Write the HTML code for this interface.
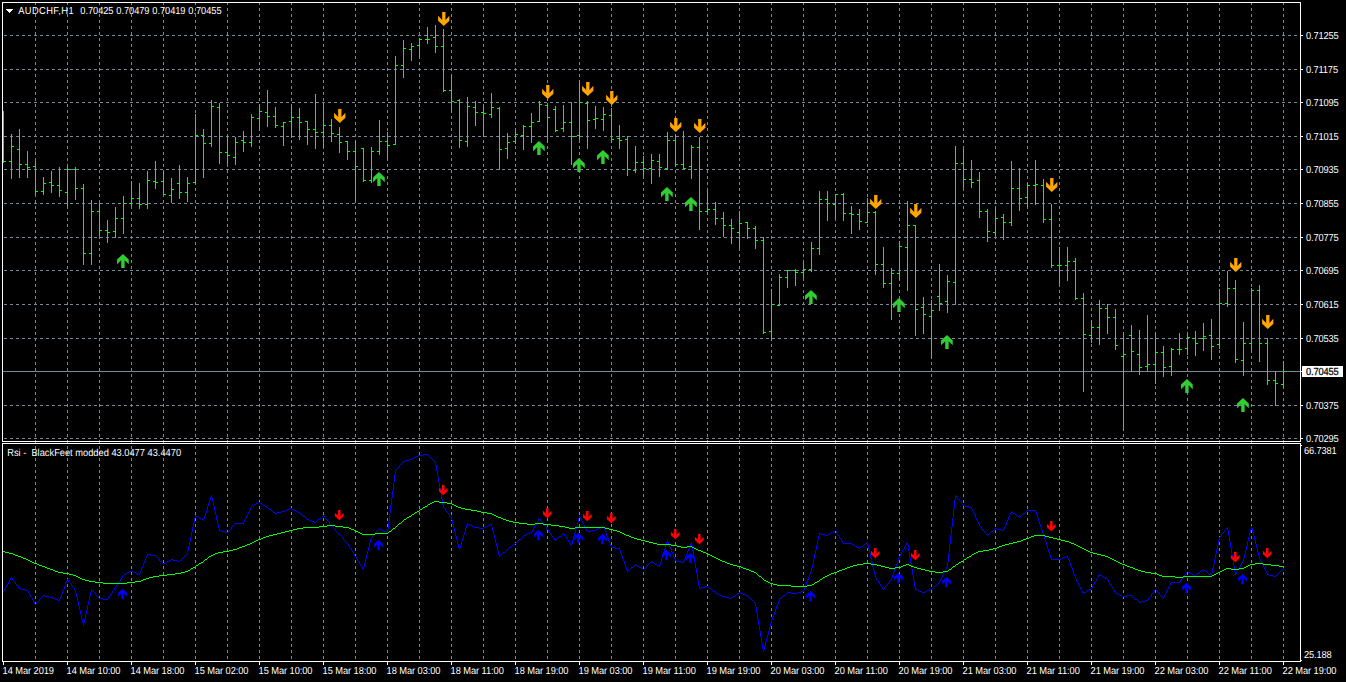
<!DOCTYPE html>
<html lang="en"><head><meta charset="utf-8"><title>AUDCHF,H1</title>
<style>html,body{margin:0;padding:0;background:#000;overflow:hidden}svg{display:block}text{font-family:"Liberation Sans",Arial,sans-serif;font-size:10.2px;fill:#fff;text-rendering:geometricPrecision}</style></head><body>
<svg width="1346" height="682" viewBox="0 0 1346 682">
<rect width="1346" height="682" fill="#000"/>
<g shape-rendering="crispEdges" stroke="#778899" stroke-width="1" fill="none" stroke-dasharray="3 3">
<path d="M35.5 2V661M67.5 2V661M99.5 2V661M131.5 2V661M163.5 2V661M195.5 2V661M227.5 2V661M259.5 2V661M291.5 2V661M323.5 2V661M355.5 2V661M387.5 2V661M419.5 2V661M451.5 2V661M483.5 2V661M515.5 2V661M547.5 2V661M579.5 2V661M611.5 2V661M643.5 2V661M675.5 2V661M707.5 2V661M739.5 2V661M771.5 2V661M803.5 2V661M835.5 2V661M867.5 2V661M899.5 2V661M931.5 2V661M963.5 2V661M995.5 2V661M1027.5 2V661M1059.5 2V661M1091.5 2V661M1123.5 2V661M1155.5 2V661M1187.5 2V661M1219.5 2V661M1251.5 2V661M1283.5 2V661"/>
<path d="M4 35.5H1300M4 69.5H1300M4 102.5H1300M4 136.5H1300M4 169.5H1300M4 203.5H1300M4 237.5H1300M4 270.5H1300M4 304.5H1300M4 338.5H1300M4 405.5H1300M4 438.5H1300"/>
</g>
<rect x="3" y="371" width="1297" height="1" fill="#778899" shape-rendering="crispEdges"/>
<path d="M3 111h1v52h-1zM4 161h2v1h-2zM11 134h1v45h-1zM9 161h2v1h-2zM12 146h2v1h-2zM19 129h1v49h-1zM17 149h2v1h-2zM20 164h2v1h-2zM27 151h1v27h-1zM25 164h2v1h-2zM28 167h2v1h-2zM35 161h1v34h-1zM33 166h2v1h-2zM36 191h2v1h-2zM43 177h1v18h-1zM41 191h2v1h-2zM44 183h2v1h-2zM51 171h1v22h-1zM49 182h2v1h-2zM52 185h2v1h-2zM59 167h1v30h-1zM57 185h2v1h-2zM60 190h2v1h-2zM67 167h1v39h-1zM65 192h2v1h-2zM68 169h2v1h-2zM75 167h1v33h-1zM73 169h2v1h-2zM76 188h2v1h-2zM83 184h1v81h-1zM81 188h2v1h-2zM84 253h2v1h-2zM91 200h1v65h-1zM89 253h2v1h-2zM92 211h2v1h-2zM99 203h1v33h-1zM97 211h2v1h-2zM100 230h2v1h-2zM107 220h1v23h-1zM105 230h2v1h-2zM108 232h2v1h-2zM115 207h1v31h-1zM113 231h2v1h-2zM116 218h2v1h-2zM123 196h1v38h-1zM121 218h2v1h-2zM124 203h2v1h-2zM131 181h1v25h-1zM129 203h2v1h-2zM132 198h2v1h-2zM139 183h1v26h-1zM137 198h2v1h-2zM140 204h2v1h-2zM147 171h1v38h-1zM145 204h2v1h-2zM148 180h2v1h-2zM155 161h1v28h-1zM153 181h2v1h-2zM156 182h2v1h-2zM163 171h1v24h-1zM161 181h2v1h-2zM164 194h2v1h-2zM171 178h1v25h-1zM169 195h2v1h-2zM172 189h2v1h-2zM179 165h1v34h-1zM177 183h2v1h-2zM180 192h2v1h-2zM187 177h1v25h-1zM185 192h2v1h-2zM188 183h2v1h-2zM195 114h1v70h-1zM193 182h2v1h-2zM196 135h2v1h-2zM203 129h1v49h-1zM201 135h2v1h-2zM204 143h2v1h-2zM211 100h1v47h-1zM209 143h2v1h-2zM212 106h2v1h-2zM219 103h1v61h-1zM217 107h2v1h-2zM220 152h2v1h-2zM227 136h1v28h-1zM225 152h2v1h-2zM228 155h2v1h-2zM235 137h1v28h-1zM233 157h2v1h-2zM236 142h2v1h-2zM243 131h1v21h-1zM241 140h2v1h-2zM244 142h2v1h-2zM251 114h1v33h-1zM249 142h2v1h-2zM252 117h2v1h-2zM259 104h1v27h-1zM257 118h2v1h-2zM260 111h2v1h-2zM267 90h1v37h-1zM265 112h2v1h-2zM268 116h2v1h-2zM275 107h1v21h-1zM273 116h2v1h-2zM276 125h2v1h-2zM283 122h1v24h-1zM281 126h2v1h-2zM284 122h2v1h-2zM291 106h1v32h-1zM289 121h2v1h-2zM292 117h2v1h-2zM299 108h1v32h-1zM297 117h2v1h-2zM300 122h2v1h-2zM307 121h1v24h-1zM305 121h2v1h-2zM308 129h2v1h-2zM315 94h1v55h-1zM313 129h2v1h-2zM316 132h2v1h-2zM323 103h1v45h-1zM321 132h2v1h-2zM324 125h2v1h-2zM331 119h1v23h-1zM329 125h2v1h-2zM332 133h2v1h-2zM339 127h1v26h-1zM337 134h2v1h-2zM340 142h2v1h-2zM347 141h1v19h-1zM345 141h2v1h-2zM348 151h2v1h-2zM355 140h1v62h-1zM353 151h2v1h-2zM356 166h2v1h-2zM363 148h1v34h-1zM361 148h2v1h-2zM364 180h2v1h-2zM371 147h1v36h-1zM369 180h2v1h-2zM372 151h2v1h-2zM379 120h1v35h-1zM377 151h2v1h-2zM380 141h2v1h-2zM387 132h1v27h-1zM385 141h2v1h-2zM388 145h2v1h-2zM395 56h1v89h-1zM393 144h2v1h-2zM396 65h2v1h-2zM403 40h1v38h-1zM401 65h2v1h-2zM404 48h2v1h-2zM411 43h1v18h-1zM409 49h2v1h-2zM412 46h2v1h-2zM419 38h1v19h-1zM417 45h2v1h-2zM420 39h2v1h-2zM427 27h1v17h-1zM425 39h2v1h-2zM428 39h2v1h-2zM435 25h1v28h-1zM433 37h2v1h-2zM436 46h2v1h-2zM443 29h1v63h-1zM441 46h2v1h-2zM444 90h2v1h-2zM451 75h1v38h-1zM449 90h2v1h-2zM452 101h2v1h-2zM459 99h1v49h-1zM457 100h2v1h-2zM460 140h2v1h-2zM467 97h1v50h-1zM465 141h2v1h-2zM468 106h2v1h-2zM475 101h1v25h-1zM473 107h2v1h-2zM476 112h2v1h-2zM483 106h1v31h-1zM481 112h2v1h-2zM484 113h2v1h-2zM491 93h1v25h-1zM489 114h2v1h-2zM492 107h2v1h-2zM499 107h1v63h-1zM497 108h2v1h-2zM500 149h2v1h-2zM507 133h1v26h-1zM505 148h2v1h-2zM508 142h2v1h-2zM515 130h1v14h-1zM513 141h2v1h-2zM516 134h2v1h-2zM523 125h1v25h-1zM521 135h2v1h-2zM524 126h2v1h-2zM531 113h1v30h-1zM529 126h2v1h-2zM532 122h2v1h-2zM539 101h1v21h-1zM537 121h2v1h-2zM540 104h2v1h-2zM547 103h1v40h-1zM545 105h2v1h-2zM548 117h2v1h-2zM555 106h1v26h-1zM553 109h2v1h-2zM556 130h2v1h-2zM563 105h1v27h-1zM561 128h2v1h-2zM564 122h2v1h-2zM571 102h1v63h-1zM569 122h2v1h-2zM572 136h2v1h-2zM579 80h1v60h-1zM577 135h2v1h-2zM580 102h2v1h-2zM587 101h1v48h-1zM585 103h2v1h-2zM588 120h2v1h-2zM595 106h1v23h-1zM593 119h2v1h-2zM596 118h2v1h-2zM603 107h1v24h-1zM601 119h2v1h-2zM604 114h2v1h-2zM611 108h1v35h-1zM609 115h2v1h-2zM612 139h2v1h-2zM619 125h1v24h-1zM617 138h2v1h-2zM620 140h2v1h-2zM627 136h1v40h-1zM625 139h2v1h-2zM628 169h2v1h-2zM635 146h1v27h-1zM633 170h2v1h-2zM636 162h2v1h-2zM643 156h1v20h-1zM641 162h2v1h-2zM644 168h2v1h-2zM651 154h1v30h-1zM649 168h2v1h-2zM652 160h2v1h-2zM659 154h1v23h-1zM657 161h2v1h-2zM660 167h2v1h-2zM667 132h1v38h-1zM665 168h2v1h-2zM668 140h2v1h-2zM675 134h1v33h-1zM673 140h2v1h-2zM676 164h2v1h-2zM683 131h1v38h-1zM681 164h2v1h-2zM684 168h2v1h-2zM691 145h1v34h-1zM689 166h2v1h-2zM692 147h2v1h-2zM699 137h1v93h-1zM697 147h2v1h-2zM700 211h2v1h-2zM707 191h1v22h-1zM705 211h2v1h-2zM708 209h2v1h-2zM715 202h1v23h-1zM713 209h2v1h-2zM716 218h2v1h-2zM723 212h1v25h-1zM721 218h2v1h-2zM724 225h2v1h-2zM731 219h1v25h-1zM729 225h2v1h-2zM732 228h2v1h-2zM739 211h1v37h-1zM737 232h2v1h-2zM740 223h2v1h-2zM747 222h1v17h-1zM745 222h2v1h-2zM748 228h2v1h-2zM755 226h1v23h-1zM753 228h2v1h-2zM756 240h2v1h-2zM763 237h1v97h-1zM761 240h2v1h-2zM764 332h2v1h-2zM771 289h1v52h-1zM769 331h2v1h-2zM772 304h2v1h-2zM779 274h1v32h-1zM777 305h2v1h-2zM780 277h2v1h-2zM787 270h1v18h-1zM785 277h2v1h-2zM788 270h2v1h-2zM795 269h1v17h-1zM793 270h2v1h-2zM796 272h2v1h-2zM803 263h1v15h-1zM801 272h2v1h-2zM804 269h2v1h-2zM811 242h1v30h-1zM809 269h2v1h-2zM812 248h2v1h-2zM819 191h1v64h-1zM817 248h2v1h-2zM820 199h2v1h-2zM827 191h1v30h-1zM825 199h2v1h-2zM828 203h2v1h-2zM835 194h1v25h-1zM833 204h2v1h-2zM836 194h2v1h-2zM843 193h1v28h-1zM841 194h2v1h-2zM844 213h2v1h-2zM851 206h1v28h-1zM849 213h2v1h-2zM852 214h2v1h-2zM859 209h1v21h-1zM857 214h2v1h-2zM860 221h2v1h-2zM867 198h1v25h-1zM865 222h2v1h-2zM868 212h2v1h-2zM875 211h1v64h-1zM873 212h2v1h-2zM876 264h2v1h-2zM883 247h1v41h-1zM881 264h2v1h-2zM884 283h2v1h-2zM891 268h1v52h-1zM889 283h2v1h-2zM892 273h2v1h-2zM899 241h1v39h-1zM897 273h2v1h-2zM900 246h2v1h-2zM907 201h1v90h-1zM905 247h2v1h-2zM908 225h2v1h-2zM915 225h1v111h-1zM913 225h2v1h-2zM916 309h2v1h-2zM923 297h1v37h-1zM921 307h2v1h-2zM924 314h2v1h-2zM931 300h1v58h-1zM929 316h2v1h-2zM932 310h2v1h-2zM939 264h1v47h-1zM937 296h2v1h-2zM940 303h2v1h-2zM947 275h1v38h-1zM945 301h2v1h-2zM948 281h2v1h-2zM955 146h1v159h-1zM953 282h2v1h-2zM956 163h2v1h-2zM963 149h1v39h-1zM961 163h2v1h-2zM964 179h2v1h-2zM971 160h1v28h-1zM969 179h2v1h-2zM972 182h2v1h-2zM979 172h1v46h-1zM977 180h2v1h-2zM980 211h2v1h-2zM987 209h1v33h-1zM985 211h2v1h-2zM988 231h2v1h-2zM995 208h1v28h-1zM993 232h2v1h-2zM996 218h2v1h-2zM1003 214h1v26h-1zM1001 217h2v1h-2zM1004 222h2v1h-2zM1011 161h1v65h-1zM1009 222h2v1h-2zM1012 188h2v1h-2zM1019 168h1v43h-1zM1017 188h2v1h-2zM1020 198h2v1h-2zM1027 183h1v24h-1zM1025 197h2v1h-2zM1028 185h2v1h-2zM1035 160h1v45h-1zM1033 185h2v1h-2zM1036 184h2v1h-2zM1043 179h1v44h-1zM1041 185h2v1h-2zM1044 219h2v1h-2zM1051 204h1v64h-1zM1049 219h2v1h-2zM1052 265h2v1h-2zM1059 247h1v37h-1zM1057 265h2v1h-2zM1060 265h2v1h-2zM1067 247h1v34h-1zM1065 265h2v1h-2zM1068 261h2v1h-2zM1075 258h1v42h-1zM1073 261h2v1h-2zM1076 298h2v1h-2zM1083 293h1v99h-1zM1081 298h2v1h-2zM1084 334h2v1h-2zM1091 321h1v22h-1zM1089 335h2v1h-2zM1092 327h2v1h-2zM1099 300h1v45h-1zM1097 327h2v1h-2zM1100 308h2v1h-2zM1107 304h1v30h-1zM1105 308h2v1h-2zM1108 317h2v1h-2zM1115 309h1v41h-1zM1113 317h2v1h-2zM1116 345h2v1h-2zM1123 332h1v99h-1zM1121 356h2v1h-2zM1124 354h2v1h-2zM1131 325h1v47h-1zM1129 335h2v1h-2zM1132 351h2v1h-2zM1139 330h1v45h-1zM1137 354h2v1h-2zM1140 367h2v1h-2zM1147 315h1v56h-1zM1145 366h2v1h-2zM1148 364h2v1h-2zM1155 333h1v51h-1zM1153 364h2v1h-2zM1156 352h2v1h-2zM1163 346h1v31h-1zM1161 352h2v1h-2zM1164 367h2v1h-2zM1171 348h1v28h-1zM1169 366h2v1h-2zM1172 349h2v1h-2zM1179 333h1v22h-1zM1177 349h2v1h-2zM1180 349h2v1h-2zM1187 335h1v20h-1zM1185 348h2v1h-2zM1188 337h2v1h-2zM1195 331h1v25h-1zM1193 338h2v1h-2zM1196 343h2v1h-2zM1203 323h1v28h-1zM1201 338h2v1h-2zM1204 336h2v1h-2zM1211 319h1v41h-1zM1209 335h2v1h-2zM1212 346h2v1h-2zM1219 289h1v60h-1zM1217 344h2v1h-2zM1220 303h2v1h-2zM1227 271h1v36h-1zM1225 303h2v1h-2zM1228 288h2v1h-2zM1235 280h1v83h-1zM1233 288h2v1h-2zM1236 359h2v1h-2zM1243 322h1v54h-1zM1241 360h2v1h-2zM1244 343h2v1h-2zM1251 288h1v62h-1zM1249 343h2v1h-2zM1252 290h2v1h-2zM1259 285h1v77h-1zM1257 290h2v1h-2zM1260 343h2v1h-2zM1267 338h1v47h-1zM1265 343h2v1h-2zM1268 380h2v1h-2zM1275 371h1v35h-1zM1273 380h2v1h-2zM1276 383h2v1h-2zM1283 361h1v26h-1zM1281 384h2v1h-2zM1284 371h2v1h-2z" fill="#00ff00" shape-rendering="crispEdges"/>
<path d="M3 591h1v1h-1zM4 589h1v2h-1zM5 587h1v2h-1zM6 585h1v2h-1zM7 584h1v1h-1zM8 582h1v2h-1zM9 580h1v2h-1zM10 578h1v2h-1zM11 577h1v1h-1zM12 578h1v2h-1zM13 580h1v1h-1zM14 581h1v1h-1zM15 582h1v2h-1zM16 584h1v1h-1zM17 585h1v1h-1zM18 586h1v2h-1zM19 588h2v1h-2zM21 589h4v1h-4zM25 590h3v1h-3zM28 591h1v2h-1zM29 593h1v2h-1zM30 595h1v2h-1zM31 597h1v1h-1zM32 598h1v2h-1zM33 600h1v2h-1zM34 602h1v2h-1zM35 604h1v1h-1zM36 603h1v1h-1zM37 602h1v1h-1zM38 601h1v1h-1zM39 599h1v2h-1zM40 598h1v1h-1zM41 597h1v1h-1zM42 596h1v1h-1zM43 595h2v1h-2zM45 596h4v1h-4zM49 597h4v1h-4zM53 598h2v1h-2zM55 599h3v1h-3zM58 600h2v1h-2zM59 599h1v1h-1zM60 597h1v2h-1zM61 594h1v3h-1zM62 591h1v3h-1zM63 589h1v2h-1zM64 586h1v3h-1zM65 583h1v3h-1zM66 581h1v2h-1zM67 579h1v2h-1zM68 580h1v2h-1zM69 582h1v1h-1zM70 583h1v1h-1zM71 584h1v2h-1zM72 586h1v1h-1zM73 587h1v1h-1zM74 588h1v2h-1zM75 590h1v3h-1zM76 593h1v4h-1zM77 597h1v4h-1zM78 601h1v5h-1zM79 606h1v4h-1zM80 610h1v5h-1zM81 615h1v4h-1zM82 619h1v4h-1zM83 623h1v3h-1zM84 619h1v4h-1zM85 614h1v5h-1zM86 610h1v4h-1zM87 605h1v5h-1zM88 601h1v4h-1zM89 596h1v5h-1zM90 592h1v4h-1zM91 589h1v3h-1zM92 590h1v1h-1zM93 591h1v1h-1zM94 592h1v1h-1zM95 593h1v2h-1zM96 595h1v1h-1zM97 596h1v1h-1zM98 597h1v1h-1zM99 598h4v1h-4zM103 599h5v1h-5zM108 597h1v2h-1zM109 596h1v1h-1zM110 594h1v2h-1zM111 593h1v1h-1zM112 591h1v2h-1zM113 590h1v1h-1zM114 588h1v2h-1zM115 587h1v1h-1zM116 585h1v2h-1zM117 584h1v1h-1zM118 582h1v2h-1zM119 581h1v1h-1zM120 579h1v2h-1zM121 578h1v1h-1zM122 576h1v2h-1zM123 575h1v1h-1zM124 574h2v1h-2zM126 573h1v1h-1zM127 572h2v1h-2zM129 571h2v1h-2zM131 570h1v1h-1zM132 571h2v1h-2zM134 572h2v1h-2zM136 573h2v1h-2zM138 574h2v1h-2zM139 573h1v1h-1zM140 571h1v2h-1zM141 568h1v3h-1zM142 566h1v2h-1zM143 563h1v3h-1zM144 561h1v2h-1zM145 558h1v3h-1zM146 556h1v2h-1zM147 554h4v1h-4zM147 555h1v1h-1zM151 555h5v1h-5zM156 556h1v1h-1zM157 557h1v1h-1zM158 558h1v1h-1zM159 559h1v2h-1zM160 561h1v1h-1zM161 562h1v1h-1zM162 563h1v1h-1zM163 564h1v1h-1zM164 563h2v1h-2zM166 562h1v1h-1zM167 561h2v1h-2zM169 560h2v1h-2zM171 559h2v1h-2zM173 560h4v1h-4zM177 561h3v1h-3zM180 560h1v1h-1zM181 559h1v1h-1zM182 558h1v1h-1zM183 557h1v1h-1zM184 556h1v1h-1zM185 555h1v1h-1zM186 554h1v1h-1zM187 551h1v3h-1zM188 546h1v5h-1zM189 542h1v4h-1zM190 537h1v5h-1zM191 532h1v5h-1zM192 527h1v5h-1zM193 523h1v4h-1zM194 518h1v5h-1zM195 515h1v3h-1zM196 516h2v1h-2zM198 517h1v1h-1zM199 518h2v1h-2zM201 519h3v1h-3zM203 520h1v1h-1zM204 516h1v3h-1zM205 513h1v3h-1zM206 510h1v3h-1zM207 506h1v4h-1zM208 503h1v3h-1zM209 500h1v3h-1zM210 497h1v3h-1zM211 495h1v3h-1zM212 498h1v4h-1zM213 502h1v4h-1zM214 506h1v5h-1zM215 511h1v4h-1zM216 515h1v5h-1zM217 520h1v4h-1zM218 524h1v4h-1zM219 528h1v3h-1zM220 530h1v1h-1zM221 531h4v1h-4zM225 532h3v1h-3zM228 531h1v1h-1zM229 530h1v1h-1zM230 529h1v1h-1zM231 527h1v2h-1zM232 526h1v1h-1zM233 525h1v1h-1zM234 524h1v1h-1zM235 523h9v1h-9zM243 522h1v1h-1zM244 520h1v2h-1zM245 518h1v2h-1zM246 516h1v2h-1zM247 514h1v2h-1zM248 512h1v2h-1zM249 510h1v2h-1zM250 508h1v2h-1zM251 506h1v2h-1zM252 505h2v1h-2zM254 504h2v1h-2zM256 503h2v1h-2zM258 502h2v1h-2zM260 503h2v1h-2zM262 504h1v1h-1zM263 505h2v1h-2zM265 506h2v1h-2zM267 507h1v1h-1zM268 508h1v1h-1zM269 509h2v1h-2zM271 510h1v1h-1zM272 511h1v1h-1zM273 512h2v1h-2zM275 513h2v1h-2zM277 512h4v1h-4zM281 511h4v1h-4zM285 510h2v1h-2zM287 509h3v1h-3zM290 508h2v1h-2zM292 509h2v1h-2zM294 510h2v1h-2zM296 511h2v1h-2zM298 512h2v1h-2zM300 513h1v1h-1zM301 514h1v1h-1zM302 515h1v1h-1zM303 516h2v1h-2zM305 517h1v1h-1zM306 518h1v1h-1zM307 519h2v1h-2zM309 520h2v1h-2zM311 521h3v1h-3zM314 522h2v1h-2zM316 521h1v1h-1zM317 520h1v1h-1zM318 519h1v1h-1zM319 518h2v1h-2zM321 517h1v1h-1zM322 516h1v1h-1zM323 515h1v1h-1zM324 516h1v1h-1zM325 517h1v2h-1zM326 519h1v1h-1zM327 520h1v1h-1zM328 521h1v1h-1zM329 522h1v2h-1zM330 524h1v1h-1zM331 525h1v1h-1zM332 526h1v1h-1zM333 527h1v1h-1zM334 528h1v1h-1zM335 529h1v2h-1zM336 531h1v1h-1zM337 532h1v1h-1zM338 533h1v1h-1zM339 534h1v1h-1zM340 535h1v1h-1zM341 536h1v1h-1zM342 537h1v1h-1zM343 538h1v2h-1zM344 540h1v1h-1zM345 541h1v1h-1zM346 542h1v1h-1zM347 543h1v1h-1zM348 544h1v2h-1zM349 546h1v2h-1zM350 548h1v1h-1zM351 549h1v2h-1zM352 551h1v1h-1zM353 552h1v2h-1zM354 554h1v2h-1zM355 556h1v1h-1zM356 557h1v2h-1zM357 559h1v2h-1zM358 561h1v1h-1zM359 562h1v2h-1zM360 564h1v1h-1zM361 565h1v2h-1zM362 567h2v1h-2zM362 568h2v1h-2zM363 569h1v1h-1zM364 563h1v4h-1zM365 559h1v4h-1zM366 555h1v4h-1zM367 551h1v4h-1zM368 547h1v4h-1zM369 543h1v4h-1zM370 539h1v4h-1zM371 537h1v2h-1zM372 536h1v1h-1zM373 535h1v1h-1zM374 534h1v1h-1zM375 532h1v2h-1zM376 531h1v1h-1zM377 530h1v1h-1zM378 529h1v1h-1zM379 528h1v1h-1zM380 529h2v1h-2zM382 530h2v1h-2zM384 531h2v1h-2zM386 532h2v1h-2zM387 529h1v3h-1zM388 521h1v8h-1zM389 513h1v8h-1zM390 505h1v8h-1zM391 498h1v7h-1zM392 490h1v8h-1zM393 482h1v8h-1zM394 474h1v8h-1zM395 470h1v4h-1zM396 469h1v1h-1zM397 468h1v1h-1zM398 467h1v1h-1zM399 465h1v2h-1zM400 464h1v1h-1zM401 463h1v1h-1zM402 462h1v1h-1zM403 461h2v1h-2zM405 460h4v1h-4zM409 459h3v1h-3zM412 458h2v1h-2zM414 457h2v1h-2zM416 456h2v1h-2zM418 455h5v1h-5zM423 454h5v1h-5zM428 455h1v1h-1zM429 456h1v1h-1zM430 457h1v1h-1zM431 458h1v1h-1zM432 459h1v1h-1zM433 460h1v1h-1zM434 461h1v1h-1zM435 462h1v3h-1zM436 465h1v6h-1zM437 471h1v6h-1zM438 477h1v5h-1zM439 482h1v6h-1zM440 488h1v5h-1zM441 493h1v6h-1zM442 499h1v6h-1zM443 505h1v3h-1zM444 508h1v1h-1zM445 509h1v2h-1zM446 511h1v1h-1zM447 512h1v1h-1zM448 513h1v1h-1zM449 514h1v2h-1zM450 516h1v1h-1zM451 517h1v3h-1zM452 520h1v4h-1zM453 524h1v4h-1zM454 528h1v4h-1zM455 532h1v4h-1zM456 536h1v4h-1zM457 540h1v4h-1zM458 544h1v4h-1zM459 548h1v2h-1zM460 545h1v3h-1zM461 541h1v4h-1zM462 538h1v3h-1zM463 535h1v3h-1zM464 532h1v3h-1zM465 528h1v4h-1zM466 525h1v3h-1zM467 523h1v2h-1zM468 524h2v1h-2zM470 525h2v1h-2zM472 526h2v1h-2zM474 527h5v1h-5zM479 528h5v1h-5zM484 527h2v1h-2zM486 526h2v1h-2zM488 525h2v1h-2zM490 524h2v1h-2zM491 525h1v2h-1zM492 527h1v4h-1zM493 531h1v4h-1zM494 535h1v4h-1zM495 539h1v4h-1zM496 543h1v4h-1zM497 547h1v4h-1zM498 551h1v4h-1zM499 555h2v1h-2zM499 556h1v1h-1zM501 554h1v1h-1zM502 553h1v1h-1zM503 552h2v1h-2zM505 551h1v1h-1zM506 550h1v1h-1zM507 549h1v1h-1zM508 548h1v1h-1zM509 547h2v1h-2zM511 546h1v1h-1zM512 545h1v1h-1zM513 544h2v1h-2zM515 543h1v1h-1zM516 542h1v1h-1zM517 541h1v1h-1zM518 540h1v1h-1zM519 539h2v1h-2zM521 538h1v1h-1zM522 537h1v1h-1zM523 536h1v1h-1zM524 535h2v1h-2zM526 534h2v1h-2zM528 533h2v1h-2zM530 532h2v1h-2zM532 530h1v2h-1zM533 528h1v2h-1zM534 526h1v2h-1zM535 525h1v1h-1zM536 523h1v2h-1zM537 521h1v2h-1zM538 519h1v2h-1zM539 518h1v1h-1zM540 519h1v2h-1zM541 521h1v1h-1zM542 522h1v1h-1zM543 523h1v2h-1zM544 525h1v1h-1zM545 526h1v1h-1zM546 527h1v2h-1zM547 529h1v1h-1zM548 530h1v2h-1zM549 532h1v1h-1zM550 533h1v1h-1zM551 534h1v2h-1zM552 536h1v1h-1zM553 537h1v1h-1zM554 538h1v2h-1zM555 540h1v1h-1zM556 539h1v1h-1zM557 538h1v1h-1zM558 537h1v1h-1zM559 536h2v1h-2zM561 535h1v1h-1zM562 534h1v1h-1zM563 533h1v1h-1zM564 534h1v2h-1zM565 536h1v1h-1zM566 537h1v2h-1zM567 539h1v1h-1zM568 540h1v2h-1zM569 542h1v1h-1zM570 543h1v2h-1zM571 544h1v2h-1zM572 540h1v4h-1zM573 536h1v4h-1zM574 533h1v3h-1zM575 529h1v4h-1zM576 526h1v3h-1zM577 522h1v4h-1zM578 518h1v4h-1zM579 516h1v2h-1zM580 517h1v2h-1zM581 519h1v2h-1zM582 521h1v2h-1zM583 523h1v2h-1zM584 525h1v2h-1zM585 527h1v2h-1zM586 529h1v2h-1zM587 531h4v1h-4zM591 530h5v1h-5zM596 529h2v1h-2zM598 528h2v1h-2zM600 527h2v1h-2zM602 526h2v1h-2zM603 527h1v1h-1zM604 528h1v2h-1zM605 530h1v3h-1zM606 533h1v3h-1zM607 536h1v2h-1zM608 538h1v3h-1zM609 541h1v3h-1zM610 544h1v2h-1zM611 546h1v2h-1zM612 547h3v1h-3zM615 548h5v1h-5zM619 549h1v1h-1zM620 550h1v3h-1zM621 553h1v3h-1zM622 556h1v3h-1zM623 559h1v2h-1zM624 561h1v3h-1zM625 564h1v3h-1zM626 567h1v3h-1zM627 570h2v1h-2zM627 571h1v1h-1zM629 569h1v1h-1zM630 568h1v1h-1zM631 567h2v1h-2zM633 566h1v1h-1zM634 565h1v1h-1zM635 564h1v1h-1zM636 565h2v1h-2zM638 566h1v1h-1zM639 567h2v1h-2zM641 568h2v1h-2zM643 569h1v1h-1zM644 568h1v1h-1zM645 567h1v1h-1zM646 566h1v1h-1zM647 565h1v1h-1zM648 564h1v1h-1zM649 563h1v1h-1zM650 562h1v1h-1zM651 561h1v1h-1zM652 562h2v1h-2zM654 563h1v1h-1zM655 564h2v1h-2zM657 565h3v1h-3zM659 566h1v1h-1zM660 562h1v3h-1zM661 558h1v4h-1zM662 555h1v3h-1zM663 552h1v3h-1zM664 549h1v3h-1zM665 545h1v4h-1zM666 542h1v3h-1zM667 540h1v2h-1zM668 542h1v2h-1zM669 544h1v3h-1zM670 547h1v2h-1zM671 549h1v3h-1zM672 552h1v2h-1zM673 554h1v3h-1zM674 557h1v2h-1zM675 559h1v2h-1zM676 560h1v1h-1zM677 561h4v1h-4zM681 562h3v1h-3zM683 561h1v1h-1zM684 559h1v2h-1zM685 556h1v3h-1zM686 554h1v2h-1zM687 551h1v3h-1zM688 549h1v2h-1zM689 546h1v3h-1zM690 544h2v1h-2zM690 545h1v1h-1zM691 542h1v2h-1zM692 545h1v6h-1zM693 551h1v6h-1zM694 557h1v6h-1zM695 563h1v5h-1zM696 568h1v6h-1zM697 574h1v6h-1zM698 580h1v6h-1zM699 586h1v3h-1zM700 588h1v1h-1zM701 587h4v1h-4zM705 586h3v1h-3zM708 587h1v1h-1zM709 588h2v1h-2zM711 589h1v1h-1zM712 590h1v1h-1zM713 591h2v1h-2zM715 592h1v1h-1zM716 593h2v1h-2zM718 594h2v1h-2zM720 595h2v1h-2zM722 596h3v1h-3zM725 597h4v1h-4zM729 598h3v1h-3zM732 597h1v1h-1zM733 596h2v1h-2zM735 595h1v1h-1zM736 594h1v1h-1zM737 593h2v1h-2zM739 592h2v1h-2zM741 593h2v1h-2zM743 594h3v1h-3zM746 595h2v1h-2zM748 596h1v1h-1zM749 597h1v1h-1zM750 598h1v1h-1zM751 599h1v1h-1zM752 600h1v1h-1zM753 601h1v1h-1zM754 602h1v1h-1zM755 603h1v4h-1zM756 607h1v6h-1zM757 613h1v6h-1zM758 619h1v6h-1zM759 625h1v6h-1zM760 631h1v6h-1zM761 637h1v6h-1zM762 643h1v6h-1zM763 649h1v3h-1zM764 646h1v4h-1zM765 642h1v4h-1zM766 638h1v4h-1zM767 635h1v3h-1zM768 631h1v4h-1zM769 627h1v4h-1zM770 623h1v4h-1zM771 620h1v3h-1zM772 617h1v3h-1zM773 615h1v2h-1zM774 612h1v3h-1zM775 609h1v3h-1zM776 606h1v3h-1zM777 604h1v2h-1zM778 601h1v3h-1zM779 599h1v2h-1zM780 598h1v1h-1zM781 597h1v1h-1zM782 596h1v1h-1zM783 595h2v1h-2zM785 594h1v1h-1zM786 593h1v1h-1zM787 592h4v1h-4zM791 593h6v1h-6zM797 592h4v1h-4zM801 591h3v1h-3zM803 590h1v1h-1zM804 588h1v2h-1zM805 585h1v3h-1zM806 582h1v3h-1zM807 580h1v2h-1zM808 577h1v3h-1zM809 574h1v3h-1zM810 572h1v2h-1zM811 568h1v4h-1zM812 564h1v4h-1zM813 559h1v5h-1zM814 554h1v5h-1zM815 550h1v4h-1zM816 545h1v5h-1zM817 540h1v5h-1zM818 536h1v4h-1zM819 533h1v3h-1zM820 533h1v1h-1zM821 534h4v1h-4zM825 535h3v1h-3zM828 534h2v1h-2zM830 533h1v1h-1zM831 532h2v1h-2zM833 531h2v1h-2zM835 530h1v1h-1zM836 531h1v2h-1zM837 533h1v2h-1zM838 535h1v1h-1zM839 536h1v2h-1zM840 538h1v1h-1zM841 539h1v2h-1zM842 541h1v2h-1zM843 543h9v1h-9zM852 544h2v1h-2zM854 545h1v1h-1zM855 546h2v1h-2zM857 547h2v1h-2zM859 548h1v1h-1zM860 547h1v1h-1zM861 546h2v1h-2zM863 545h1v1h-1zM864 544h1v1h-1zM865 543h3v1h-3zM867 542h1v1h-1zM867 544h1v1h-1zM868 545h1v4h-1zM869 549h1v4h-1zM870 553h1v5h-1zM871 558h1v4h-1zM872 562h1v5h-1zM873 567h1v4h-1zM874 571h1v4h-1zM875 575h1v3h-1zM876 578h1v2h-1zM877 580h1v1h-1zM878 581h1v2h-1zM879 583h1v1h-1zM880 584h1v2h-1zM881 586h1v1h-1zM882 587h1v2h-1zM883 589h1v1h-1zM884 588h1v1h-1zM885 586h1v2h-1zM886 585h1v1h-1zM887 584h1v1h-1zM888 583h1v1h-1zM889 581h1v2h-1zM890 580h1v1h-1zM891 578h1v2h-1zM892 575h1v3h-1zM893 572h1v3h-1zM894 569h1v3h-1zM895 567h1v2h-1zM896 564h1v3h-1zM897 561h1v3h-1zM898 558h1v3h-1zM899 556h1v2h-1zM900 554h1v2h-1zM901 552h1v2h-1zM902 550h1v2h-1zM903 549h1v1h-1zM904 547h1v2h-1zM905 545h1v2h-1zM906 543h2v1h-2zM906 544h2v1h-2zM907 542h1v1h-1zM908 545h1v6h-1zM909 551h1v6h-1zM910 557h1v6h-1zM911 563h1v6h-1zM912 569h1v6h-1zM913 575h1v6h-1zM914 581h1v6h-1zM915 587h1v3h-1zM916 589h1v1h-1zM917 590h2v1h-2zM919 591h3v1h-3zM922 592h3v1h-3zM925 591h2v1h-2zM927 590h3v1h-3zM930 589h2v1h-2zM932 588h1v1h-1zM933 587h1v1h-1zM934 586h1v1h-1zM935 585h2v1h-2zM937 584h1v1h-1zM938 583h1v1h-1zM939 581h1v2h-1zM940 579h1v2h-1zM941 577h1v2h-1zM942 575h1v2h-1zM943 573h1v2h-1zM944 571h1v2h-1zM945 569h1v2h-1zM946 567h1v2h-1zM947 562h1v5h-1zM948 553h1v9h-1zM949 544h1v9h-1zM950 535h1v9h-1zM951 527h1v8h-1zM952 518h1v9h-1zM953 509h1v9h-1zM954 500h1v9h-1zM955 495h1v5h-1zM956 496h1v1h-1zM957 497h1v2h-1zM958 499h1v1h-1zM959 500h1v1h-1zM960 501h1v1h-1zM961 502h1v2h-1zM962 504h1v1h-1zM963 505h2v1h-2zM965 506h4v1h-4zM969 507h3v1h-3zM971 508h1v1h-1zM972 509h1v2h-1zM973 511h1v2h-1zM974 513h1v2h-1zM975 515h1v3h-1zM976 518h1v2h-1zM977 520h1v2h-1zM978 522h1v2h-1zM979 524h1v2h-1zM980 526h1v1h-1zM981 527h1v2h-1zM982 529h1v1h-1zM983 530h1v1h-1zM984 531h1v1h-1zM985 532h1v2h-1zM986 534h1v1h-1zM987 535h1v1h-1zM988 534h1v1h-1zM989 533h1v1h-1zM990 532h1v1h-1zM991 531h2v1h-2zM993 530h1v1h-1zM994 529h1v1h-1zM995 528h2v1h-2zM997 529h4v1h-4zM1001 530h3v1h-3zM1003 529h1v1h-1zM1004 527h1v2h-1zM1005 525h1v2h-1zM1006 522h1v3h-1zM1007 520h1v2h-1zM1008 517h1v3h-1zM1009 515h1v2h-1zM1010 513h1v2h-1zM1011 511h1v2h-1zM1012 512h1v1h-1zM1013 513h2v1h-2zM1015 514h1v1h-1zM1016 515h1v1h-1zM1017 516h2v1h-2zM1019 517h1v1h-1zM1020 516h1v1h-1zM1021 515h1v1h-1zM1022 514h1v1h-1zM1023 513h2v1h-2zM1025 512h1v1h-1zM1026 511h1v1h-1zM1027 510h9v1h-9zM1035 511h1v1h-1zM1036 512h1v3h-1zM1037 515h1v3h-1zM1038 518h1v3h-1zM1039 521h1v3h-1zM1040 524h1v3h-1zM1041 527h1v3h-1zM1042 530h1v3h-1zM1043 533h1v3h-1zM1044 536h1v3h-1zM1045 539h1v3h-1zM1046 542h1v3h-1zM1047 545h1v4h-1zM1048 549h1v3h-1zM1049 552h1v3h-1zM1050 555h1v3h-1zM1051 558h1v2h-1zM1052 559h9v1h-9zM1061 558h2v1h-2zM1063 557h3v1h-3zM1066 556h2v1h-2zM1067 557h1v1h-1zM1068 558h1v2h-1zM1069 560h1v3h-1zM1070 563h1v3h-1zM1071 566h1v2h-1zM1072 568h1v3h-1zM1073 571h1v3h-1zM1074 574h1v2h-1zM1075 576h1v3h-1zM1076 579h1v2h-1zM1077 581h1v2h-1zM1078 583h1v2h-1zM1079 585h1v2h-1zM1080 587h1v2h-1zM1081 589h1v2h-1zM1082 591h1v2h-1zM1083 593h1v1h-1zM1084 592h2v1h-2zM1086 591h1v1h-1zM1087 590h2v1h-2zM1089 589h2v1h-2zM1091 588h1v1h-1zM1092 586h1v2h-1zM1093 584h1v2h-1zM1094 582h1v2h-1zM1095 581h1v1h-1zM1096 579h1v2h-1zM1097 577h1v2h-1zM1098 575h1v2h-1zM1099 574h1v1h-1zM1100 575h2v1h-2zM1102 576h1v1h-1zM1103 577h2v1h-2zM1105 578h2v1h-2zM1107 579h1v1h-1zM1108 580h1v2h-1zM1109 582h1v2h-1zM1110 584h1v1h-1zM1111 585h1v2h-1zM1112 587h1v1h-1zM1113 588h1v2h-1zM1114 590h1v2h-1zM1115 592h1v1h-1zM1116 593h2v1h-2zM1118 594h2v1h-2zM1120 595h2v1h-2zM1122 596h5v1h-5zM1127 595h5v1h-5zM1132 596h1v1h-1zM1133 597h1v1h-1zM1134 598h1v1h-1zM1135 599h2v1h-2zM1137 600h1v1h-1zM1138 601h1v1h-1zM1139 602h2v1h-2zM1141 601h4v1h-4zM1145 600h3v1h-3zM1148 598h1v2h-1zM1149 597h1v1h-1zM1150 596h1v1h-1zM1151 594h1v2h-1zM1152 593h1v1h-1zM1153 592h1v1h-1zM1154 590h1v2h-1zM1155 589h1v1h-1zM1156 590h1v1h-1zM1157 591h1v1h-1zM1158 592h1v1h-1zM1159 593h1v2h-1zM1160 595h1v1h-1zM1161 596h1v1h-1zM1162 597h2v1h-2zM1163 598h1v1h-1zM1164 595h1v2h-1zM1165 593h1v2h-1zM1166 591h1v2h-1zM1167 589h1v2h-1zM1168 587h1v2h-1zM1169 585h1v2h-1zM1170 583h1v2h-1zM1171 582h9v1h-9zM1180 580h1v2h-1zM1181 579h1v1h-1zM1182 578h1v1h-1zM1183 576h1v2h-1zM1184 575h1v1h-1zM1185 574h1v1h-1zM1186 572h1v2h-1zM1187 571h1v1h-1zM1188 572h2v1h-2zM1190 573h2v1h-2zM1192 574h2v1h-2zM1194 575h2v1h-2zM1196 574h1v1h-1zM1197 573h2v1h-2zM1199 572h1v1h-1zM1200 571h1v1h-1zM1201 570h2v1h-2zM1203 569h1v1h-1zM1204 570h1v1h-1zM1205 571h2v1h-2zM1207 572h1v1h-1zM1208 573h1v1h-1zM1209 574h3v1h-3zM1211 573h1v1h-1zM1211 575h1v1h-1zM1212 568h1v5h-1zM1213 564h1v4h-1zM1214 559h1v5h-1zM1215 554h1v5h-1zM1216 549h1v5h-1zM1217 545h1v4h-1zM1218 540h1v5h-1zM1219 537h1v3h-1zM1220 536h1v1h-1zM1221 534h1v2h-1zM1222 533h1v1h-1zM1223 532h1v1h-1zM1224 531h1v1h-1zM1225 529h1v2h-1zM1226 528h2v1h-2zM1227 527h1v1h-1zM1227 529h1v1h-1zM1228 530h1v6h-1zM1229 536h1v6h-1zM1230 542h1v6h-1zM1231 548h1v6h-1zM1232 554h1v6h-1zM1233 560h1v6h-1zM1234 566h1v6h-1zM1235 572h1v3h-1zM1236 572h1v2h-1zM1237 570h1v2h-1zM1238 568h1v2h-1zM1239 567h1v1h-1zM1240 565h1v2h-1zM1241 563h1v2h-1zM1242 561h1v2h-1zM1243 558h1v3h-1zM1244 554h1v4h-1zM1245 550h1v4h-1zM1246 546h1v4h-1zM1247 541h1v5h-1zM1248 537h1v4h-1zM1249 533h1v4h-1zM1250 529h1v4h-1zM1251 526h1v3h-1zM1252 528h1v4h-1zM1253 532h1v4h-1zM1254 536h1v4h-1zM1255 540h1v4h-1zM1256 544h1v4h-1zM1257 548h1v4h-1zM1258 552h1v4h-1zM1259 556h1v3h-1zM1260 559h1v2h-1zM1261 561h1v2h-1zM1262 563h1v2h-1zM1263 565h1v2h-1zM1264 567h1v2h-1zM1265 569h1v2h-1zM1266 571h1v2h-1zM1267 573h1v2h-1zM1268 574h1v1h-1zM1269 575h4v1h-4zM1273 576h3v1h-3zM1276 575h1v1h-1zM1277 574h1v1h-1zM1278 573h1v1h-1zM1279 572h1v1h-1zM1280 571h1v1h-1zM1281 570h1v1h-1zM1282 569h1v1h-1zM1283 568h1v1h-1z" fill="#0000ff" shape-rendering="crispEdges"/>
<path d="M3 551h2v1h-2zM5 552h4v1h-4zM9 553h4v1h-4zM13 554h2v1h-2zM15 555h3v1h-3zM18 556h3v1h-3zM21 557h2v1h-2zM23 558h3v1h-3zM26 559h2v1h-2zM28 560h2v1h-2zM30 561h2v1h-2zM32 562h2v1h-2zM34 563h3v1h-3zM37 564h2v1h-2zM39 565h3v1h-3zM42 566h3v1h-3zM45 567h2v1h-2zM47 568h3v1h-3zM50 569h3v1h-3zM53 570h2v1h-2zM55 571h3v1h-3zM58 572h5v1h-5zM63 573h6v1h-6zM69 574h4v1h-4zM73 575h3v1h-3zM76 576h2v1h-2zM78 577h2v1h-2zM80 578h2v1h-2zM82 579h3v1h-3zM85 580h4v1h-4zM89 581h6v1h-6zM95 582h8v1h-8zM103 583h24v1h-24zM127 582h8v1h-8zM135 581h6v1h-6zM141 580h2v1h-2zM143 579h3v1h-3zM146 578h3v1h-3zM149 577h4v1h-4zM153 576h6v1h-6zM159 575h8v1h-8zM167 574h8v1h-8zM175 573h6v1h-6zM181 572h4v1h-4zM185 571h3v1h-3zM188 570h2v1h-2zM190 569h1v1h-1zM191 568h2v1h-2zM193 567h2v1h-2zM195 566h1v1h-1zM196 565h2v1h-2zM198 564h1v1h-1zM199 563h2v1h-2zM201 562h2v1h-2zM203 561h1v1h-1zM204 560h1v1h-1zM205 559h2v1h-2zM207 558h1v1h-1zM208 557h1v1h-1zM209 556h2v1h-2zM211 555h2v1h-2zM213 554h2v1h-2zM215 553h3v1h-3zM218 552h5v1h-5zM223 551h6v1h-6zM229 550h4v1h-4zM233 549h4v1h-4zM237 548h2v1h-2zM239 547h3v1h-3zM242 546h3v1h-3zM245 545h2v1h-2zM247 544h3v1h-3zM250 543h2v1h-2zM252 542h2v1h-2zM254 541h2v1h-2zM256 540h2v1h-2zM258 539h3v1h-3zM261 538h2v1h-2zM263 537h3v1h-3zM266 536h3v1h-3zM269 535h4v1h-4zM273 534h4v1h-4zM277 533h4v1h-4zM281 532h4v1h-4zM285 531h4v1h-4zM289 530h4v1h-4zM293 529h4v1h-4zM297 528h6v1h-6zM303 527h16v1h-16zM319 526h8v1h-8zM327 525h8v1h-8zM335 526h8v1h-8zM343 527h6v1h-6zM349 528h2v1h-2zM351 529h3v1h-3zM354 530h2v1h-2zM356 531h2v1h-2zM358 532h2v1h-2zM360 533h2v1h-2zM362 534h13v1h-13zM375 533h13v1h-13zM388 532h1v1h-1zM389 531h2v1h-2zM391 530h1v1h-1zM392 529h1v1h-1zM393 528h2v1h-2zM395 527h1v1h-1zM396 526h1v1h-1zM397 525h1v1h-1zM398 524h1v1h-1zM399 523h2v1h-2zM401 522h1v1h-1zM402 521h1v1h-1zM403 520h1v1h-1zM404 519h2v1h-2zM406 518h1v1h-1zM407 517h2v1h-2zM409 516h2v1h-2zM411 515h1v1h-1zM412 514h2v1h-2zM414 513h1v1h-1zM415 512h2v1h-2zM417 511h2v1h-2zM419 510h1v1h-1zM420 509h2v1h-2zM422 508h1v1h-1zM423 507h2v1h-2zM425 506h2v1h-2zM427 505h1v1h-1zM428 504h2v1h-2zM430 503h2v1h-2zM432 502h2v1h-2zM434 501h5v1h-5zM439 502h8v1h-8zM447 503h5v1h-5zM452 504h2v1h-2zM454 505h2v1h-2zM456 506h2v1h-2zM458 507h3v1h-3zM461 508h4v1h-4zM465 509h6v1h-6zM471 510h6v1h-6zM477 511h4v1h-4zM481 512h6v1h-6zM487 513h5v1h-5zM492 514h2v1h-2zM494 515h2v1h-2zM496 516h2v1h-2zM498 517h3v1h-3zM501 518h2v1h-2zM503 519h3v1h-3zM506 520h3v1h-3zM509 521h4v1h-4zM513 522h6v1h-6zM519 523h8v1h-8zM527 524h8v1h-8zM535 523h8v1h-8zM543 524h8v1h-8zM551 525h8v1h-8zM559 526h6v1h-6zM565 527h4v1h-4zM569 528h6v1h-6zM575 527h30v1h-30zM605 528h4v1h-4zM609 529h4v1h-4zM613 530h4v1h-4zM617 531h3v1h-3zM620 532h2v1h-2zM622 533h2v1h-2zM624 534h2v1h-2zM626 535h3v1h-3zM629 536h2v1h-2zM631 537h3v1h-3zM634 538h3v1h-3zM637 539h4v1h-4zM641 540h4v1h-4zM645 541h4v1h-4zM649 542h4v1h-4zM653 543h4v1h-4zM657 544h14v1h-14zM671 545h6v1h-6zM677 546h4v1h-4zM681 547h6v1h-6zM687 546h5v1h-5zM692 547h2v1h-2zM694 548h2v1h-2zM696 549h2v1h-2zM698 550h3v1h-3zM701 551h2v1h-2zM703 552h3v1h-3zM706 553h2v1h-2zM708 554h2v1h-2zM710 555h2v1h-2zM712 556h2v1h-2zM714 557h2v1h-2zM716 558h2v1h-2zM718 559h2v1h-2zM720 560h2v1h-2zM722 561h3v1h-3zM725 562h2v1h-2zM727 563h3v1h-3zM730 564h3v1h-3zM733 565h4v1h-4zM737 566h4v1h-4zM741 567h2v1h-2zM743 568h3v1h-3zM746 569h3v1h-3zM749 570h2v1h-2zM751 571h3v1h-3zM754 572h2v1h-2zM756 573h1v1h-1zM757 574h1v1h-1zM758 575h1v1h-1zM759 576h2v1h-2zM761 577h1v1h-1zM762 578h1v1h-1zM763 579h1v1h-1zM764 580h2v1h-2zM766 581h2v1h-2zM768 582h2v1h-2zM770 583h3v1h-3zM773 584h4v1h-4zM777 585h14v1h-14zM791 586h16v1h-16zM807 585h5v1h-5zM812 584h2v1h-2zM814 583h1v1h-1zM815 582h2v1h-2zM817 581h2v1h-2zM819 580h1v1h-1zM820 579h2v1h-2zM822 578h1v1h-1zM823 577h2v1h-2zM825 576h2v1h-2zM827 575h2v1h-2zM829 574h2v1h-2zM831 573h3v1h-3zM834 572h3v1h-3zM837 571h2v1h-2zM839 570h3v1h-3zM842 569h3v1h-3zM845 568h2v1h-2zM847 567h3v1h-3zM850 566h3v1h-3zM853 565h4v1h-4zM857 564h6v1h-6zM863 563h8v1h-8zM871 564h6v1h-6zM877 565h4v1h-4zM881 566h4v1h-4zM885 567h4v1h-4zM889 568h6v1h-6zM895 567h6v1h-6zM901 566h2v1h-2zM903 565h3v1h-3zM906 564h3v1h-3zM909 565h2v1h-2zM911 566h3v1h-3zM914 567h3v1h-3zM917 568h4v1h-4zM921 569h4v1h-4zM925 570h4v1h-4zM929 571h6v1h-6zM935 572h8v1h-8zM943 571h5v1h-5zM948 570h1v1h-1zM949 569h2v1h-2zM951 568h1v1h-1zM952 567h1v1h-1zM953 566h2v1h-2zM955 565h1v1h-1zM956 564h2v1h-2zM958 563h1v1h-1zM959 562h2v1h-2zM961 561h2v1h-2zM963 560h1v1h-1zM964 559h2v1h-2zM966 558h1v1h-1zM967 557h2v1h-2zM969 556h2v1h-2zM971 555h1v1h-1zM972 554h2v1h-2zM974 553h2v1h-2zM976 552h2v1h-2zM978 551h5v1h-5zM983 550h6v1h-6zM989 549h4v1h-4zM993 548h4v1h-4zM997 547h2v1h-2zM999 546h3v1h-3zM1002 545h3v1h-3zM1005 544h4v1h-4zM1009 543h4v1h-4zM1013 542h4v1h-4zM1017 541h4v1h-4zM1021 540h2v1h-2zM1023 539h3v1h-3zM1026 538h3v1h-3zM1029 537h2v1h-2zM1031 536h3v1h-3zM1034 535h11v1h-11zM1045 536h4v1h-4zM1049 537h4v1h-4zM1053 538h4v1h-4zM1057 539h4v1h-4zM1061 540h4v1h-4zM1065 541h4v1h-4zM1069 542h2v1h-2zM1071 543h3v1h-3zM1074 544h2v1h-2zM1076 545h2v1h-2zM1078 546h2v1h-2zM1080 547h2v1h-2zM1082 548h2v1h-2zM1084 549h2v1h-2zM1086 550h2v1h-2zM1088 551h2v1h-2zM1090 552h3v1h-3zM1093 553h4v1h-4zM1097 554h4v1h-4zM1101 555h4v1h-4zM1105 556h3v1h-3zM1108 557h2v1h-2zM1110 558h2v1h-2zM1112 559h2v1h-2zM1114 560h2v1h-2zM1116 561h2v1h-2zM1118 562h2v1h-2zM1120 563h2v1h-2zM1122 564h3v1h-3zM1125 565h2v1h-2zM1127 566h3v1h-3zM1130 567h3v1h-3zM1133 568h2v1h-2zM1135 569h3v1h-3zM1138 570h3v1h-3zM1141 571h4v1h-4zM1145 572h6v1h-6zM1151 573h6v1h-6zM1157 574h2v1h-2zM1159 575h3v1h-3zM1162 576h13v1h-13zM1175 577h8v1h-8zM1183 576h29v1h-29zM1212 575h2v1h-2zM1214 574h2v1h-2zM1216 573h2v1h-2zM1218 572h2v1h-2zM1220 571h2v1h-2zM1222 570h2v1h-2zM1224 569h2v1h-2zM1226 568h5v1h-5zM1231 569h8v1h-8zM1239 568h5v1h-5zM1244 567h2v1h-2zM1246 566h2v1h-2zM1248 565h2v1h-2zM1250 564h5v1h-5zM1255 563h8v1h-8zM1263 564h8v1h-8zM1271 565h8v1h-8zM1279 566h5v1h-5z" fill="#00ff00" shape-rendering="crispEdges"/>
<polygon points="338.15,109.10 341.45,109.10 341.45,116.94 345.40,112.87 345.40,117.74 339.80,123.10 334.10,117.74 334.10,112.87 338.15,116.94" fill="#ffa500"/>
<polygon points="442.15,12.10 445.45,12.10 445.45,19.94 449.40,15.87 449.40,20.74 443.80,26.10 438.10,20.74 438.10,15.87 442.15,19.94" fill="#ffa500"/>
<polygon points="546.15,85.10 549.45,85.10 549.45,92.94 553.40,88.87 553.40,93.74 547.80,99.10 542.10,93.74 542.10,88.87 546.15,92.94" fill="#ffa500"/>
<polygon points="586.15,82.10 589.45,82.10 589.45,89.94 593.40,85.87 593.40,90.74 587.80,96.10 582.10,90.74 582.10,85.87 586.15,89.94" fill="#ffa500"/>
<polygon points="610.15,91.10 613.45,91.10 613.45,98.94 617.40,94.87 617.40,99.74 611.80,105.10 606.10,99.74 606.10,94.87 610.15,98.94" fill="#ffa500"/>
<polygon points="674.15,118.10 677.45,118.10 677.45,125.94 681.40,121.87 681.40,126.74 675.80,132.10 670.10,126.74 670.10,121.87 674.15,125.94" fill="#ffa500"/>
<polygon points="698.15,119.10 701.45,119.10 701.45,126.94 705.40,122.87 705.40,127.74 699.80,133.10 694.10,127.74 694.10,122.87 698.15,126.94" fill="#ffa500"/>
<polygon points="874.15,195.10 877.45,195.10 877.45,202.94 881.40,198.87 881.40,203.74 875.80,209.10 870.10,203.74 870.10,198.87 874.15,202.94" fill="#ffa500"/>
<polygon points="914.15,204.10 917.45,204.10 917.45,211.94 921.40,207.87 921.40,212.74 915.80,218.10 910.10,212.74 910.10,207.87 914.15,211.94" fill="#ffa500"/>
<polygon points="1050.15,178.10 1053.44,178.10 1053.44,185.94 1057.40,181.87 1057.40,186.74 1051.80,192.10 1046.10,186.74 1046.10,181.87 1050.15,185.94" fill="#ffa500"/>
<polygon points="1234.15,258.10 1237.44,258.10 1237.44,265.94 1241.40,261.87 1241.40,266.74 1235.80,272.10 1230.10,266.74 1230.10,261.87 1234.15,265.94" fill="#ffa500"/>
<polygon points="1266.15,315.10 1269.44,315.10 1269.44,322.94 1273.40,318.87 1273.40,323.74 1267.80,329.10 1262.10,323.74 1262.10,318.87 1266.15,322.94" fill="#ffa500"/>
<polygon points="121.24,268.00 124.66,268.00 124.66,260.21 128.75,264.25 128.75,259.42 122.95,254.10 117.05,259.42 117.05,264.25 121.24,260.21" fill="#32cd32"/>
<polygon points="377.24,186.00 380.66,186.00 380.66,178.21 384.75,182.25 384.75,177.42 378.95,172.10 373.05,177.42 373.05,182.25 377.24,178.21" fill="#32cd32"/>
<polygon points="537.24,155.00 540.65,155.00 540.65,147.21 544.75,151.25 544.75,146.42 538.95,141.10 533.05,146.42 533.05,151.25 537.24,147.21" fill="#32cd32"/>
<polygon points="577.24,172.00 580.65,172.00 580.65,164.21 584.75,168.25 584.75,163.42 578.95,158.10 573.05,163.42 573.05,168.25 577.24,164.21" fill="#32cd32"/>
<polygon points="601.24,164.00 604.65,164.00 604.65,156.21 608.75,160.25 608.75,155.42 602.95,150.10 597.05,155.42 597.05,160.25 601.24,156.21" fill="#32cd32"/>
<polygon points="665.24,201.00 668.65,201.00 668.65,193.21 672.75,197.25 672.75,192.42 666.95,187.10 661.05,192.42 661.05,197.25 665.24,193.21" fill="#32cd32"/>
<polygon points="689.24,211.00 692.65,211.00 692.65,203.21 696.75,207.25 696.75,202.42 690.95,197.10 685.05,202.42 685.05,207.25 689.24,203.21" fill="#32cd32"/>
<polygon points="809.24,304.00 812.65,304.00 812.65,296.21 816.75,300.25 816.75,295.42 810.95,290.10 805.05,295.42 805.05,300.25 809.24,296.21" fill="#32cd32"/>
<polygon points="897.24,312.00 900.65,312.00 900.65,304.21 904.75,308.25 904.75,303.42 898.95,298.10 893.05,303.42 893.05,308.25 897.24,304.21" fill="#32cd32"/>
<polygon points="945.24,349.00 948.65,349.00 948.65,341.21 952.75,345.25 952.75,340.42 946.95,335.10 941.05,340.42 941.05,345.25 945.24,341.21" fill="#32cd32"/>
<polygon points="1185.24,393.00 1188.65,393.00 1188.65,385.21 1192.75,389.25 1192.75,384.42 1186.95,379.10 1181.05,384.42 1181.05,389.25 1185.24,385.21" fill="#32cd32"/>
<polygon points="1241.24,412.00 1244.65,412.00 1244.65,404.21 1248.75,408.25 1248.75,403.42 1242.95,398.10 1237.05,403.42 1237.05,408.25 1241.24,404.21" fill="#32cd32"/>
<polygon points="338.02,510.00 340.55,510.00 340.55,515.76 343.60,512.77 343.60,516.34 339.29,520.27 334.90,516.34 334.90,512.77 338.02,515.76" fill="#ff0000"/>
<polygon points="442.02,485.00 444.55,485.00 444.55,490.76 447.60,487.77 447.60,491.34 443.29,495.27 438.90,491.34 438.90,487.77 442.02,490.76" fill="#ff0000"/>
<polygon points="546.02,508.00 548.55,508.00 548.55,513.76 551.60,510.77 551.60,514.34 547.29,518.27 542.90,514.34 542.90,510.77 546.02,513.76" fill="#ff0000"/>
<polygon points="586.02,511.00 588.55,511.00 588.55,516.76 591.60,513.77 591.60,517.34 587.29,521.27 582.90,517.34 582.90,513.77 586.02,516.76" fill="#ff0000"/>
<polygon points="610.02,513.00 612.55,513.00 612.55,518.76 615.60,515.77 615.60,519.34 611.29,523.27 606.90,519.34 606.90,515.77 610.02,518.76" fill="#ff0000"/>
<polygon points="674.02,529.00 676.55,529.00 676.55,534.76 679.60,531.77 679.60,535.34 675.29,539.27 670.90,535.34 670.90,531.77 674.02,534.76" fill="#ff0000"/>
<polygon points="698.02,534.00 700.55,534.00 700.55,539.76 703.60,536.77 703.60,540.34 699.29,544.27 694.90,540.34 694.90,536.77 698.02,539.76" fill="#ff0000"/>
<polygon points="874.02,548.00 876.55,548.00 876.55,553.76 879.60,550.77 879.60,554.34 875.29,558.27 870.90,554.34 870.90,550.77 874.02,553.76" fill="#ff0000"/>
<polygon points="914.02,550.00 916.55,550.00 916.55,555.76 919.60,552.77 919.60,556.34 915.29,560.27 910.90,556.34 910.90,552.77 914.02,555.76" fill="#ff0000"/>
<polygon points="1050.02,521.00 1052.56,521.00 1052.56,526.76 1055.60,523.77 1055.60,527.34 1051.29,531.27 1046.90,527.34 1046.90,523.77 1050.02,526.76" fill="#ff0000"/>
<polygon points="1234.02,552.00 1236.56,552.00 1236.56,557.76 1239.60,554.77 1239.60,558.34 1235.29,562.27 1230.90,558.34 1230.90,554.77 1234.02,557.76" fill="#ff0000"/>
<polygon points="1266.02,548.00 1268.56,548.00 1268.56,553.76 1271.60,550.77 1271.60,554.34 1267.29,558.27 1262.90,554.34 1262.90,550.77 1266.02,553.76" fill="#ff0000"/>
<polygon points="121.27,599.20 123.81,599.20 123.81,593.44 126.85,596.43 126.85,592.86 122.54,588.93 118.15,592.86 118.15,596.43 121.27,593.44" fill="#0000ff"/>
<polygon points="377.27,550.20 379.80,550.20 379.80,544.44 382.85,547.43 382.85,543.86 378.54,539.93 374.15,543.86 374.15,547.43 377.27,544.44" fill="#0000ff"/>
<polygon points="537.27,540.20 539.80,540.20 539.80,534.44 542.85,537.43 542.85,533.86 538.54,529.93 534.15,533.86 534.15,537.43 537.27,534.44" fill="#0000ff"/>
<polygon points="577.27,543.20 579.80,543.20 579.80,537.44 582.85,540.43 582.85,536.86 578.54,532.93 574.15,536.86 574.15,540.43 577.27,537.44" fill="#0000ff"/>
<polygon points="601.27,544.20 603.80,544.20 603.80,538.44 606.85,541.43 606.85,537.86 602.54,533.93 598.15,537.86 598.15,541.43 601.27,538.44" fill="#0000ff"/>
<polygon points="665.27,560.20 667.80,560.20 667.80,554.44 670.85,557.43 670.85,553.86 666.54,549.93 662.15,553.86 662.15,557.43 665.27,554.44" fill="#0000ff"/>
<polygon points="689.27,563.20 691.80,563.20 691.80,557.44 694.85,560.43 694.85,556.86 690.54,552.93 686.15,556.86 686.15,560.43 689.27,557.44" fill="#0000ff"/>
<polygon points="809.27,601.20 811.80,601.20 811.80,595.44 814.85,598.43 814.85,594.86 810.54,590.93 806.15,594.86 806.15,598.43 809.27,595.44" fill="#0000ff"/>
<polygon points="897.27,583.20 899.80,583.20 899.80,577.44 902.85,580.43 902.85,576.86 898.54,572.93 894.15,576.86 894.15,580.43 897.27,577.44" fill="#0000ff"/>
<polygon points="945.27,587.20 947.80,587.20 947.80,581.44 950.85,584.43 950.85,580.86 946.54,576.93 942.15,580.86 942.15,584.43 945.27,581.44" fill="#0000ff"/>
<polygon points="1185.27,593.20 1187.81,593.20 1187.81,587.44 1190.85,590.43 1190.85,586.86 1186.54,582.93 1182.15,586.86 1182.15,590.43 1185.27,587.44" fill="#0000ff"/>
<polygon points="1241.27,584.20 1243.81,584.20 1243.81,578.44 1246.85,581.43 1246.85,577.86 1242.54,573.93 1238.15,577.86 1238.15,581.43 1241.27,578.44" fill="#0000ff"/>
<g shape-rendering="crispEdges" fill="#fff">
<path d="M2 2h1299v440h-1299zM3 3v438h1297v-438z" fill-rule="evenodd"/>
<path d="M2 443h1299v219h-1299zM3 444v217h1297v-217z" fill-rule="evenodd"/>
<path d="M1301 35h2v1h-2zM1301 69h2v1h-2zM1301 102h2v1h-2zM1301 136h2v1h-2zM1301 169h2v1h-2zM1301 203h2v1h-2zM1301 237h2v1h-2zM1301 270h2v1h-2zM1301 304h2v1h-2zM1301 338h2v1h-2zM1301 405h2v1h-2zM1301 438h2v1h-2zM1301 371h1v1h-1zM1301 445h1v1h-1zM1301 660h1v1h-1zM3 662h1v3h-1zM67 662h1v3h-1zM131 662h1v3h-1zM195 662h1v3h-1zM259 662h1v3h-1zM323 662h1v3h-1zM387 662h1v3h-1zM451 662h1v3h-1zM515 662h1v3h-1zM579 662h1v3h-1zM643 662h1v3h-1zM707 662h1v3h-1zM771 662h1v3h-1zM835 662h1v3h-1zM899 662h1v3h-1zM963 662h1v3h-1zM1027 662h1v3h-1zM1091 662h1v3h-1zM1155 662h1v3h-1zM1219 662h1v3h-1zM1283 662h1v3h-1z"/>
<rect x="1302" y="366" width="41" height="11"/>
<path d="M6 9h7v1h-1v1h-1v1h-1v1h-1v-1h-1v-1h-1v-1h-1z"/>
</g>
<text transform="translate(18.2 14) scale(0.911 1)" style="letter-spacing:0.46px">AUDCHF,H1</text>
<text transform="translate(80.3 14) scale(0.911 1)" style="word-spacing:0.35px;letter-spacing:-0.06px">0.70425 0.70479 0.70419 0.70455</text>
<text transform="translate(7.2 456) scale(0.911 1)">Rsi -&#160;&#160;BlackFeet modded 43.0477 43.4470</text>
<text transform="translate(1306.0 39) scale(0.911 1)" style="letter-spacing:-0.15px">0.71255</text>
<text transform="translate(1306.0 73) scale(0.911 1)" style="letter-spacing:-0.15px">0.71175</text>
<text transform="translate(1306.0 106) scale(0.911 1)" style="letter-spacing:-0.15px">0.71095</text>
<text transform="translate(1306.0 140) scale(0.911 1)" style="letter-spacing:-0.15px">0.71015</text>
<text transform="translate(1306.0 173) scale(0.911 1)" style="letter-spacing:-0.15px">0.70935</text>
<text transform="translate(1306.0 207) scale(0.911 1)" style="letter-spacing:-0.15px">0.70855</text>
<text transform="translate(1306.0 241) scale(0.911 1)" style="letter-spacing:-0.15px">0.70775</text>
<text transform="translate(1306.0 274) scale(0.911 1)" style="letter-spacing:-0.15px">0.70695</text>
<text transform="translate(1306.0 308) scale(0.911 1)" style="letter-spacing:-0.15px">0.70615</text>
<text transform="translate(1306.0 342) scale(0.911 1)" style="letter-spacing:-0.15px">0.70535</text>
<text transform="translate(1306.0 409) scale(0.911 1)" style="letter-spacing:-0.15px">0.70375</text>
<text transform="translate(1306.0 442) scale(0.911 1)" style="letter-spacing:-0.15px">0.70295</text>
<text transform="translate(1306.0 375) scale(0.911 1)" style="fill:#000;stroke:#000;stroke-width:0.25px;letter-spacing:-0.15px">0.70455</text>
<text transform="translate(1303.9 454) scale(0.911 1)" style="letter-spacing:-0.15px">66.7381</text>
<text transform="translate(1303.9 658) scale(0.911 1)" style="letter-spacing:-0.15px">25.188</text>
<text transform="translate(2.6 674) scale(0.911 1)" style="letter-spacing:-0.08px">14 Mar 2019</text>
<text transform="translate(66.6 674) scale(0.911 1)" style="letter-spacing:-0.08px">14 Mar 10:00</text>
<text transform="translate(130.6 674) scale(0.911 1)" style="letter-spacing:-0.08px">14 Mar 18:00</text>
<text transform="translate(194.6 674) scale(0.911 1)" style="letter-spacing:-0.08px">15 Mar 02:00</text>
<text transform="translate(258.6 674) scale(0.911 1)" style="letter-spacing:-0.08px">15 Mar 10:00</text>
<text transform="translate(322.6 674) scale(0.911 1)" style="letter-spacing:-0.08px">15 Mar 18:00</text>
<text transform="translate(386.6 674) scale(0.911 1)" style="letter-spacing:-0.08px">18 Mar 03:00</text>
<text transform="translate(450.6 674) scale(0.911 1)" style="letter-spacing:-0.08px">18 Mar 11:00</text>
<text transform="translate(514.6 674) scale(0.911 1)" style="letter-spacing:-0.08px">18 Mar 19:00</text>
<text transform="translate(578.6 674) scale(0.911 1)" style="letter-spacing:-0.08px">19 Mar 03:00</text>
<text transform="translate(642.6 674) scale(0.911 1)" style="letter-spacing:-0.08px">19 Mar 11:00</text>
<text transform="translate(706.6 674) scale(0.911 1)" style="letter-spacing:-0.08px">19 Mar 19:00</text>
<text transform="translate(770.6 674) scale(0.911 1)" style="letter-spacing:-0.08px">20 Mar 03:00</text>
<text transform="translate(834.6 674) scale(0.911 1)" style="letter-spacing:-0.08px">20 Mar 11:00</text>
<text transform="translate(898.6 674) scale(0.911 1)" style="letter-spacing:-0.08px">20 Mar 19:00</text>
<text transform="translate(962.6 674) scale(0.911 1)" style="letter-spacing:-0.08px">21 Mar 03:00</text>
<text transform="translate(1026.6 674) scale(0.911 1)" style="letter-spacing:-0.08px">21 Mar 11:00</text>
<text transform="translate(1090.6 674) scale(0.911 1)" style="letter-spacing:-0.08px">21 Mar 19:00</text>
<text transform="translate(1154.6 674) scale(0.911 1)" style="letter-spacing:-0.08px">22 Mar 03:00</text>
<text transform="translate(1218.6 674) scale(0.911 1)" style="letter-spacing:-0.08px">22 Mar 11:00</text>
<text transform="translate(1282.6 674) scale(0.911 1)" style="letter-spacing:-0.08px">22 Mar 19:00</text>
</svg></body></html>
